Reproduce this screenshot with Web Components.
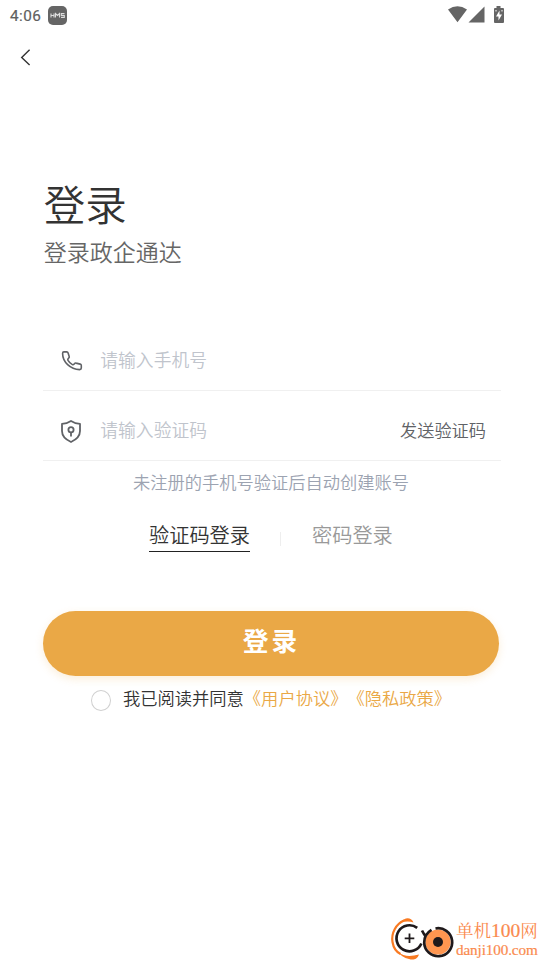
<!DOCTYPE html>
<html lang="zh-CN">
<head>
<meta charset="utf-8">
<title>登录</title>
<style>
html,body{margin:0;width:540px;height:960px;overflow:hidden;background:#fff}
body{font-family:"Noto Sans CJK SC",sans-serif;font-weight:350;color:#333;text-spacing-trim:space-all}
</style>
</head>
<body>
<login-page></login-page>
<script>
const define = (name, html) => customElements.define(name, class extends HTMLElement {
  constructor() {
    super();
    this.attachShadow({mode: 'open'}).innerHTML = '<style>*{box-sizing:border-box}svg{display:block;flex:none}</style>' + html;
  }
});

define('status-bar', `
<style>
:host{display:flex;align-items:flex-start;height:32px;padding:6px 35px 0 10px;color:#5f5f5f}
.time{font:400 15.3px/20px Roboto,sans-serif;width:38px;letter-spacing:.45px;white-space:nowrap;-webkit-text-stroke:.2px #5f5f5f}
.hms{width:19px;height:19px;border-radius:5px;background:#656565;}
.icons{margin-left:auto;display:flex}
</style>
<span class="time">4:06</span>
<svg class="hms" viewBox="0 0 19 19" fill="none" stroke="#ddd" stroke-width="1.1"><path d="M3 7.5v4M3 9.5h3M6 7.5v4M7.5 11.5v-4l2 2 2-2v4M16.5 7.6H13.3v2h3v1.9H13"/></svg>
<svg class="icons" width="57" height="18" viewBox="0 0 57 18" fill="#656565">
<path d="M0 3.6Q9.5-3 19 3.6L9.5 16.2zM20.5 16.5L36.5.5v16z"/>
<path d="M48.5 0h4v2H55q1 0 1 1v13q0 1-1 1h-8q-1 0-1-1V3q0-1 1-1h1.500z"/>
<path d="M51.500 4.500l-3.500 6h2.500v4l3.500-6h-2.500zM47.500 4h1v1.500h-1zM53.500 4h1v1.500h-1z" fill="#fff"/>
</svg>`);

define('nav-bar', `
<style>:host{display:flex;height:54px;padding:17px 0 0 20px}</style>
<svg width="11" height="17" viewBox="0 0 11 17" fill="none" stroke="#333" stroke-width="1.400"><path d="M9.600.7L1.700 8.400l7.900 7.700"/></svg>`);

define('page-heading', `
<style>
:host{display:block;height:254px;padding:86px 0 0 43.700px}
h1{font-size:41.500px;line-height:62px;font-weight:inherit;margin:0;color:#333}
p{font-size:23px;line-height:34px;margin:0;color:#666}
</style><h1><slot></slot></h1><p><slot name="sub"></slot></p>`);

define('form-field', `
<style>
:host{display:flex;align-items:flex-start;height:70px;margin:0 39px 0 43px;padding:25px 15px 0 17px;border-bottom:1px solid #f0f0f0;box-sizing:border-box}
.icon{width:24px;height:26px;margin:1px 16.300px 0 0}
.hint{font-size:17.800px;line-height:26px;color:#c0c4cc}
.action{font-size:17.200px;line-height:26px;color:#606266;margin:1px 0 0 auto}
</style>
<div class="icon"><slot name="icon"></slot></div><span class="hint"><slot></slot></span><span class="action"><slot name="action"></slot></span>`);

define('phone-icon', `<style>:host{display:block}</style>
<svg width="24" height="26" viewBox="0 0 24 26" fill="none" stroke="#606266" stroke-width="1.600" stroke-linejoin="round"><path transform="translate(.3 .3)" d="M3.600 4.600H6.400c.7 0 1.200.4 1.400 1l1.100 3.500c.2.6 0 1.100-.4 1.500l-.7.900c-.4.500-.4 1-.1 1.600 1.100 1.900 2.500 3.200 4.400 4.200.6.300 1.100.2 1.500-.3l.7-.700c.4-.5.900-.7 1.500-.5l4.100 1c.7.200 1.100.7 1.100 1.400v2.500c0 1-.7 1.600-1.700 1.600C10.100 22.300 2.300 14.600 2.300 6.200c0-.9.4-1.600 1.300-1.600z"/></svg>`);

define('shield-icon', `<style>:host{display:block;padding-top:1px}</style>
<svg width="24" height="26" viewBox="0 0 24 26" fill="none" stroke="#606266" stroke-width="1.800" stroke-linejoin="round"><path d="M11 2.900c2.600 1.700 5.500 2.700 9 3v7.200c0 5.500-3.500 8.500-9 10.900-5.500-2.400-9-5.400-9-10.900V5.900c3.500-.3 6.400-1.300 9-3z"/><circle cx="11" cy="11.700" r="2.600"/><path d="M11 14.300v4.300"/></svg>`);

define('login-tabs', `
<style>
:host{display:flex;align-items:flex-start;height:50px;padding-left:149px;margin-top:25px;font-size:20.200px;line-height:30px}
.on{width:101px;height:32px;border-bottom:1px solid #222;color:#333;white-space:nowrap}
i{width:1px;height:14px;background:#eee;margin:12px 31px 0 30px}
.off{color:#999}
</style><span class="on"><slot></slot></span><i></i><span class="off"><slot name="other"></slot></span>`);

define('submit-button', `
<style>
:host{display:block;margin:41px 41px 0 43px}
button{display:flex;justify-content:center;width:100%;height:65px;border:0;border-radius:33px;background:#eaa846;color:#fff;padding:10px 0 0 1px;font:700 25.700px/38px "Noto Sans CJK SC",sans-serif;letter-spacing:3px;box-shadow:0 3px 9px #eaa84633}
</style><button><slot></slot></button>`);

define('agreement-row', `
<style>
:host{display:flex;align-items:flex-start;padding:9px 0 0 91px;font-size:17.270px;line-height:26px;white-space:nowrap}
i{width:20px;height:21px;border:1px solid #d0d0d0;border-radius:50%;margin:5px 12px 0 0}
b{font-weight:inherit;color:#eaa846}
</style><i></i><span>我已阅读并同意<b>《用户协议》《隐私政策》</b></span>`);

define('site-watermark', `
<style>
:host{position:absolute;left:390px;top:916px;display:flex;color:#fa8a4e}
div{font-family:"Noto Serif CJK SC","Noto Sans CJK SC",serif;font-weight:400;white-space:nowrap;margin-left:1px}
.a{font-size:17.500px;height:25px;line-height:25px;margin-top:1px}
.b{font-size:15.200px;line-height:16px;font-family:"Liberation Serif",serif;letter-spacing:-.12px;-webkit-text-stroke:.2px #fa8a4e}
em{font:19.500px/25px "Liberation Serif",serif;-webkit-text-stroke:.2px #fa8a4e}
span{display:block}
</style>
<svg width="65" height="44" viewBox="0 0 65 44" fill="none">
<path d="M14 4.500C6 8 1 17 2.500 26c1 6 4 10 8 12" stroke="#f97a22" stroke-width="2.200"/>
<path d="M11 6c4-5 10-5 12.500.5-4-1.500-7.500-1-12.500-.5zM8 36c6 5 13 4.500 21 2.500-2 6-7 5.500-10 4.500C14 42 10 39 8 36z" fill="#f97a22"/>
<circle cx="48" cy="26" r="12.600" fill="#ff9650"/>
<path d="M27.200 11.800A13 13 0 1 0 31.400 27.500M45.500 12.500A14 14 0 1 1 34.200 26.500C34.200 20.500 37 16.500 41.500 13.800M32 14.500C33 16.500 34 18.500 35.500 20" stroke="#1e191b" stroke-width="2.700"/>
<circle cx="48" cy="26" r="5" fill="#1e191b"/><path d="M19.500 17.500v9.600M14.700 22.300h9.600" stroke="#1e191b" stroke-width="1.800"/>
</svg><div><span class="a">单机<em>100</em>网</span><span class="b">danji100.com</span></div>`);

define('login-page', `
<style>
:host{display:flex;flex-direction:column;position:relative;width:540px;height:960px;background:#fff}
.note{font-size:17.250px;line-height:26px;color:#9ca3b1;margin:8px 0 0 133px;white-space:nowrap}
.fields{display:block;margin-top:-19px}
</style>
<status-bar></status-bar><nav-bar></nav-bar>
<page-heading>登录<span slot="sub">登录政企通达</span></page-heading>
<div class="fields">
<form-field><phone-icon slot="icon"></phone-icon>请输入手机号</form-field>
<form-field><shield-icon slot="icon"></shield-icon>请输入验证码<span slot="action">发送验证码</span></form-field>
</div>
<div class="note">未注册的手机号验证后自动创建账号</div>
<login-tabs>验证码登录<span slot="other">密码登录</span></login-tabs>
<submit-button>登录</submit-button>
<agreement-row></agreement-row>
<site-watermark></site-watermark>`);
</script>
</body>
</html>
